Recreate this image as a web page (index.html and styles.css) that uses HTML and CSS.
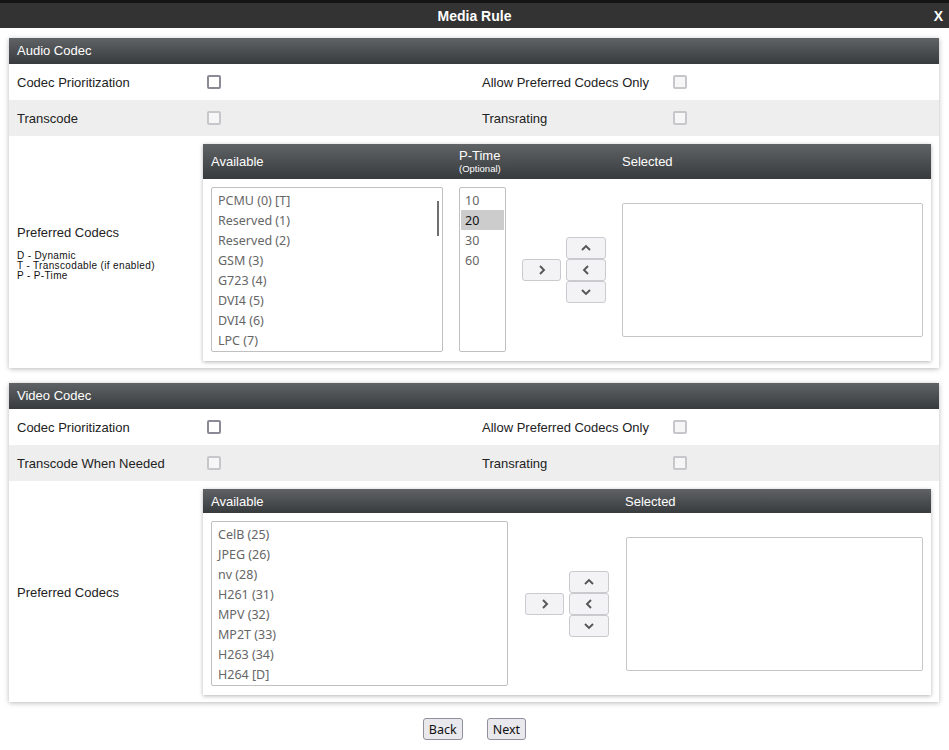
FILE: index.html
```html
<!DOCTYPE html>
<html lang="en">
<head>
  <meta charset="UTF-8">
  <title>Media Rule</title>
  <link rel="stylesheet" href="styles.css">
</head>
<body>
  <div class="titlebar">
    <span class="title">Media Rule</span>
    <span class="close">X</span>
  </div>

  <div class="panel">
    <div class="panel-head">Audio Codec</div>
    <div class="row">
      <span class="label">Codec Prioritization</span>
      <span class="check"></span>
      <span class="label">Allow Preferred Codecs Only</span>
      <span class="check off last"></span>
    </div>
    <div class="row alt">
      <span class="label">Transcode</span>
      <span class="check off"></span>
      <span class="label">Transrating</span>
      <span class="check off last"></span>
    </div>
    <div class="pref-row">
      <div class="pref-label">
        <div>Preferred Codecs</div>
        <div class="legend">
          <div>D - Dynamic</div>
          <div>T - Transcodable (if enabled)</div>
          <div>P - P-Time</div>
        </div>
      </div>
      <div class="picker">
        <div class="picker-head tall">
          <span class="col-avail">Available</span>
          <span class="col-ptime"><span>P-Time</span><small>(Optional)</small></span>
          <span>Selected</span>
        </div>
        <div class="picker-body">
          <div class="listbox audio-list">
            <div class="item">PCMU (0) [T]</div>
            <div class="item">Reserved (1)</div>
            <div class="item">Reserved (2)</div>
            <div class="item">GSM (3)</div>
            <div class="item">G723 (4)</div>
            <div class="item">DVI4 (5)</div>
            <div class="item">DVI4 (6)</div>
            <div class="item">LPC (7)</div>
            <span class="scrollbar"></span>
          </div>
          <div class="listbox ptime-list">
            <div class="item">10</div>
            <div class="item picked">20</div>
            <div class="item">30</div>
            <div class="item">60</div>
          </div>
          <button class="arrow add">
            <svg width="12" height="12" viewBox="0 0 12 12"><path d="M4 2 L8 6 L4 10" fill="none" stroke="#555" stroke-width="1.9"/></svg>
          </button>
          <div class="arrow-stack">
            <button class="arrow"><svg width="12" height="12" viewBox="0 0 12 12"><path d="M2 8 L6 4 L10 8" fill="none" stroke="#555" stroke-width="1.9"/></svg></button>
            <button class="arrow"><svg width="12" height="12" viewBox="0 0 12 12"><path d="M8 2 L4 6 L8 10" fill="none" stroke="#555" stroke-width="1.9"/></svg></button>
            <button class="arrow"><svg width="12" height="12" viewBox="0 0 12 12"><path d="M2 4 L6 8 L10 4" fill="none" stroke="#555" stroke-width="1.9"/></svg></button>
          </div>
          <div class="selected-box"></div>
        </div>
      </div>
    </div>
  </div>

  <div class="panel">
    <div class="panel-head">Video Codec</div>
    <div class="row">
      <span class="label">Codec Prioritization</span>
      <span class="check"></span>
      <span class="label">Allow Preferred Codecs Only</span>
      <span class="check off last"></span>
    </div>
    <div class="row alt">
      <span class="label">Transcode When Needed</span>
      <span class="check off"></span>
      <span class="label">Transrating</span>
      <span class="check off last"></span>
    </div>
    <div class="pref-row">
      <div class="pref-label">
        <div>Preferred Codecs</div>
      </div>
      <div class="picker">
        <div class="picker-head">
          <span class="col-avail wide">Available</span>
          <span>Selected</span>
        </div>
        <div class="picker-body video">
          <div class="listbox video-list">
            <div class="item">CelB (25)</div>
            <div class="item">JPEG (26)</div>
            <div class="item">nv (28)</div>
            <div class="item">H261 (31)</div>
            <div class="item">MPV (32)</div>
            <div class="item">MP2T (33)</div>
            <div class="item">H263 (34)</div>
            <div class="item">H264 [D]</div>
          </div>
          <button class="arrow add">
            <svg width="12" height="12" viewBox="0 0 12 12"><path d="M4 2 L8 6 L4 10" fill="none" stroke="#555" stroke-width="1.9"/></svg>
          </button>
          <div class="arrow-stack">
            <button class="arrow"><svg width="12" height="12" viewBox="0 0 12 12"><path d="M2 8 L6 4 L10 8" fill="none" stroke="#555" stroke-width="1.9"/></svg></button>
            <button class="arrow"><svg width="12" height="12" viewBox="0 0 12 12"><path d="M8 2 L4 6 L8 10" fill="none" stroke="#555" stroke-width="1.9"/></svg></button>
            <button class="arrow"><svg width="12" height="12" viewBox="0 0 12 12"><path d="M2 4 L6 8 L10 4" fill="none" stroke="#555" stroke-width="1.9"/></svg></button>
          </div>
          <div class="selected-box"></div>
        </div>
      </div>
    </div>
  </div>

  <div class="nav">
    <button class="nav-btn">Back</button>
    <button class="nav-btn">Next</button>
  </div>
</body>
</html>
```

FILE: styles.css
```css
html, body {
  margin: 0;
  padding: 0;
  background: #fff;
  font-family: "Liberation Sans", Arial, sans-serif;
  font-size: 13px;
  color: #222;
}

.titlebar {
  position: relative;
  height: 25px;
  border-top: 3px solid #141414;
  background: #333;
  color: #fff;
  display: flex;
  align-items: center;
  justify-content: center;
  font-weight: bold;
}

.title {
  font-size: 14px;
}

.close {
  position: absolute;
  right: 6px;
  top: 5px;
  font-size: 14px;
}

.panel {
  margin: 10px 10px 15px 9px;
  background: #fff;
  box-shadow: 0 1px 5px rgba(0, 0, 0, 0.28);
}

.panel-head {
  height: 26px;
  line-height: 26px;
  padding-left: 8px;
  color: #fff;
  background: linear-gradient(#606366, #383b3e);
}

.row {
  display: grid;
  grid-template-columns: 190px 275px 190px 1fr;
  align-items: center;
  height: 36px;
  padding-left: 8px;
}

.row.alt {
  background: #eeeeee;
}

.check {
  width: 10px;
  height: 10px;
  border: 2px solid #8a8a96;
  border-radius: 2px;
  background: #fff;
}

.check.off {
  border-color: #c6c6cb;
  background: #f6f6f6;
}

.check.last {
  margin-left: 1px;
}

.pref-row {
  display: flex;
  padding: 8px 8px 7px 8px;
}

.pref-label {
  width: 186px;
  display: flex;
  flex-direction: column;
  justify-content: center;
}

.legend {
  margin-top: 11px;
  font-size: 10px;
  letter-spacing: 0.35px;
  line-height: 10px;
  color: #111;
}

.picker {
  flex: 1;
  box-shadow: 0 1px 4px rgba(0, 0, 0, 0.3);
}

.picker-head {
  display: flex;
  align-items: center;
  height: 24px;
  padding-left: 8px;
  color: #fff;
  background: linear-gradient(#606366, #383b3e);
}

.picker-head.tall {
  height: 35px;
}

.col-avail {
  width: 248px;
}

.col-avail.wide {
  width: 414px;
}

.col-ptime {
  width: 163px;
  display: flex;
  flex-direction: column;
  line-height: 14px;
}

.col-ptime small {
  font-size: 9.5px;
  line-height: 11px;
}

.picker-body {
  display: flex;
  align-items: center;
  padding: 8px 8px 9px 8px;
}

.listbox {
  position: relative;
  box-sizing: border-box;
  height: 165px;
  border: 1px solid #c0c0c0;
  border-radius: 2px;
  padding: 2px 1px;
  font-family: "Noto Sans", "DejaVu Sans", sans-serif;
  font-size: 12.5px;
  color: #666;
  align-self: flex-start;
  overflow: hidden;
}

.item {
  height: 20px;
  line-height: 22px;
  padding-left: 5px;
}

.audio-list {
  width: 232px;
}

.video-list {
  width: 297px;
}

.ptime-list {
  width: 47px;
  margin-left: 16px;
}

.ptime-list .item {
  padding-left: 4px;
}

.item.picked {
  background: #cccccc;
  color: #111;
}

.scrollbar {
  position: absolute;
  left: 225px;
  top: 13px;
  width: 2px;
  height: 35px;
  background: #6f6f6f;
}

.arrow {
  box-sizing: border-box;
  width: 40px;
  height: 22px;
  padding: 0;
  display: flex;
  align-items: center;
  justify-content: center;
  border: 1px solid #c9c9ce;
  border-radius: 3px;
  background: #f3f3f5;
}

.arrow.add {
  width: 39px;
  margin-left: 16px;
}

.video .arrow.add {
  margin-left: 17px;
}

.arrow-stack {
  display: flex;
  flex-direction: column;
  margin-left: 5px;
}

.selected-box {
  box-sizing: border-box;
  flex: 1;
  height: 134px;
  margin-left: 16px;
  border: 1px solid #c6c6c6;
  border-radius: 2px;
}

.video .selected-box {
  margin-left: 17px;
}

.nav {
  display: flex;
  justify-content: center;
  gap: 24px;
  margin-top: 16px;
}

.nav-btn {
  box-sizing: border-box;
  height: 22px;
  padding: 0 5px;
  font-family: "Noto Sans", "DejaVu Sans", sans-serif;
  font-size: 12.5px;
  color: #111;
  border: 1px solid #8f8f9d;
  border-radius: 3px;
  background: #e9e9ed;
}
```
